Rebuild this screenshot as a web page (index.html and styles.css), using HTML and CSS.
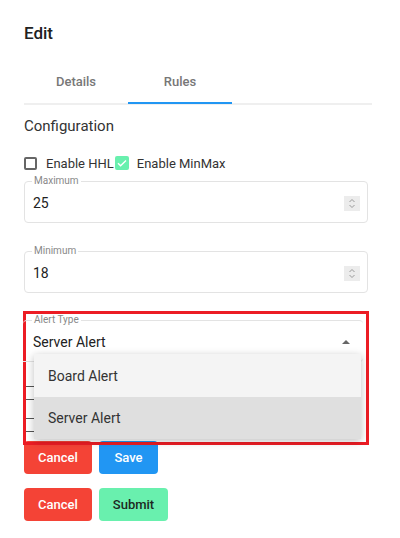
FILE: index.html
```html
<!DOCTYPE html>
<html>
<head>
<meta charset="utf-8">
<link rel="stylesheet" href="styles.css">
</head>
<body>
<div class="page">
  <h1 class="title">Edit</h1>
  <div class="tabs">
    <div class="tab">Details</div>
    <div class="tab active">Rules</div>
  </div>
  <h2 class="section">Configuration</h2>
  <div class="checks">
    <span class="box"></span><span class="label">Enable HHL</span>
    <span class="box checked"><svg width="14" height="14" viewBox="0 0 14 14"><path d="M3 7.2l2.6 2.6L11 4.4" fill="none" stroke="#fff" stroke-width="1.4"/></svg></span><span class="label">Enable MinMax</span>
  </div>
  <fieldset class="field">
    <legend>Maximum</legend>
    <div class="row"><span class="value">25</span><span class="spin"><svg width="16" height="15" viewBox="0 0 16 15"><path d="M5.5 6l2.5-2.5L10.5 6M5.5 9l2.5 2.5L10.5 9" fill="none" stroke="#9a9a9a" stroke-width="1"/></svg></span></div>
  </fieldset>
  <fieldset class="field gap">
    <legend>Minimum</legend>
    <div class="row"><span class="value">18</span><span class="spin"><svg width="16" height="15" viewBox="0 0 16 15"><path d="M5.5 6l2.5-2.5L10.5 6M5.5 9l2.5 2.5L10.5 9" fill="none" stroke="#9a9a9a" stroke-width="1"/></svg></span></div>
  </fieldset>
  <div class="alert-wrap">
    <fieldset class="field inner">
      <legend>Alert Type</legend>
      <div class="row"><span class="value">Server Alert</span><span class="arrow"></span></div>
    </fieldset>
    <div class="stub s1"></div>
    <div class="stub s2"></div>
    <ul class="menu">
      <li class="item">Board Alert</li>
      <li class="item selected">Server Alert</li>
    </ul>
  </div>
  <div class="buttons">
    <button class="btn cancel">Cancel</button>
    <button class="btn save">Save</button>
  </div>
  <div class="buttons second">
    <button class="btn cancel">Cancel</button>
    <button class="btn submit">Submit</button>
  </div>
</div>
</body>
</html>
```
FILE: styles.css
```css
* { box-sizing: border-box; }
html, body { margin: 0; background: #fff; }
body { font-family: Roboto, "Noto Sans", sans-serif; color: #333; }
.page { padding: 20px 28px 0 24px; }
.title { margin: 0; font-size: 17px; line-height: 26px; font-weight: 500; color: #212121; }
.tabs { margin-top: 12px; display: flex; height: 47px; border-bottom: 2px solid #efefef; }
.tab { width: 104px; height: 46px; display: flex; align-items: center; justify-content: center; font-size: 13px; font-weight: 500; color: #777; }
.tab.active { box-shadow: inset 0 -2px 0 #2196f3; }
.section { margin: 11px 0 0; font-size: 15px; line-height: 20px; font-weight: 400; color: #333; }
.checks { margin-top: 17px; height: 20px; display: flex; align-items: center; }
.box { width: 13px; height: 13px; border: 2px solid #666; border-radius: 2px; }
.box.checked { width: 14px; height: 14px; border: none; background: #69f0ae; display: flex; }
.label { font-size: 13px; margin: 0 1px 0 9px; color: #333; }
.box.checked + .label { margin-left: 8px; }
.field { margin: 2px 0 0; width: 344px; padding: 0 7px 5px 8px; border: 1px solid #e3e3e3; border-radius: 4px; }
.field.gap { margin-top: 22px; }
.field legend { padding: 0 2px; margin-left: -1px; font-size: 10px; line-height: 12px; color: #888; }
.row { margin-top: 2px; height: 28px; display: flex; align-items: center; justify-content: space-between; }
.value { font-size: 14px; color: #222; }
.spin { width: 16px; height: 15px; background: #ececec; display: flex; }
.alert-wrap { position: relative; margin: 18px 0 0 -1px; width: 346px; height: 134px; border: 3px solid #ec1c24; z-index: 1; margin-bottom: -4px; }
.field.inner { margin: 0 0 0 -3px; border-left: none; border-right: none; border-bottom-left-radius: 0; width: 340px; padding-left: 10px; }
.arrow { width: 0; height: 0; border-left: 4px solid transparent; border-right: 4px solid transparent; border-bottom: 4px solid #666; margin-right: 6px; }
.stub { width: 9px; height: 14px; border-top: 1px solid #555; border-bottom: 1px solid #555; }
.s1 { margin-top: 24px; }
.s2 { margin-top: 18px; }
.menu { position: absolute; left: 8px; top: 40px; width: 327px; margin: 0; padding: 0; list-style: none; box-shadow: 0 2px 8px rgba(0,0,0,0.25); }
.item { height: 43px; display: flex; align-items: center; padding-left: 14px; font-size: 14px; color: #333; background: #f4f4f4; }
.item.selected { height: 42px; background: #dfdfdf; }
.buttons { display: flex; gap: 7px; }
.buttons.second { margin-top: 14px; }
.btn { height: 33px; padding: 0 12px; border: none; border-radius: 4px; font-family: Roboto, sans-serif; font-size: 13px; font-weight: 500; color: #fff; }
.cancel { background: #f44336; width: 68px; }
.save { background: #2196f3; width: 59px; }
.submit { background: #69f0ae; color: #1d2a22; width: 69px; }
```
